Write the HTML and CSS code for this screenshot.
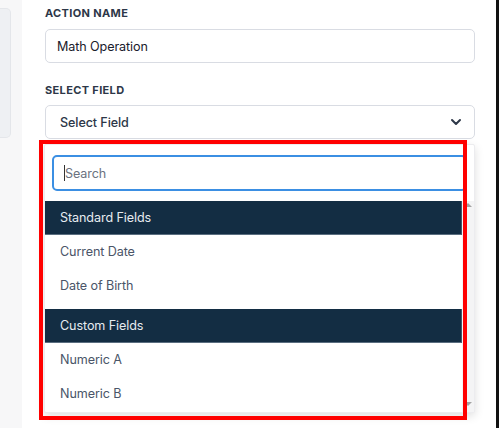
FILE: index.html
```html
<!DOCTYPE html>
<html>
<head>
<meta charset="utf-8">
<link rel="stylesheet" href="styles.css">
</head>
<body>
<div class="page">
  <aside class="side"><div class="side-box"></div></aside>
  <main class="panel">
    <div class="label">ACTION NAME</div>
    <div class="input">Math Operation</div>
    <div class="label label-2">SELECT FIELD</div>
    <div class="select">
      <span>Select Field</span>
      <svg class="chev" width="12" height="8" viewBox="0 0 12 8"><path d="M2 2l4 4 4-4" fill="none" stroke="#2d3748" stroke-width="2" stroke-linecap="round" stroke-linejoin="round"/></svg>
    </div>
    <div class="dropdown">
      <div class="search-wrap">
        <div class="search"><span class="caret"></span><span class="ph">Search</span></div>
      </div>
      <div class="list-wrap">
        <div class="list">
          <div class="group">Standard Fields</div>
          <div class="item">Current Date</div>
          <div class="item">Date of Birth</div>
          <div class="group group-2">Custom Fields</div>
          <div class="item">Numeric A</div>
          <div class="item">Numeric B</div>
        </div>
        <div class="scroll">
          <span class="arr up"></span>
          <span class="arr down"></span>
        </div>
      </div>
    </div>
    <div class="highlight"></div>
  </main>
  <div class="edge"></div>
</div>
</body>
</html>
```
FILE: styles.css
```css
* { box-sizing: border-box; }
html, body { margin: 0; padding: 0; }
body {
  width: 499px;
  height: 428px;
  overflow: hidden;
  background: #f7f7f8;
  font-family: Inter, "Noto Sans", sans-serif;
}
.page {
  display: flex;
  height: 428px;
}
.side {
  width: 22px;
  flex: none;
  padding-top: 8px;
}
.side-box {
  width: 11px;
  height: 130px;
  background: #eef0f3;
  border: 1px solid #e4e6ea;
  border-left: none;
  border-radius: 0 5px 5px 0;
}
.panel {
  position: relative;
  flex: 1;
  background: #fff;
  padding: 6px 21px 0 23px;
}
.edge {
  width: 3px;
  flex: none;
  background: #111;
}
.label {
  font-size: 11px;
  line-height: 14px;
  font-weight: 700;
  letter-spacing: 0.35px;
  color: #2d3748;
  margin-bottom: 9px;
}
.label-2 {
  margin-top: 20px;
  margin-bottom: 8px;
}
.input, .select {
  height: 34px;
  border: 1px solid #d9dce3;
  border-radius: 5px;
  display: flex;
  align-items: center;
  font-size: 12.6px;
  letter-spacing: -0.1px;
}
.input {
  padding-left: 11px;
  color: #1a202c;
}
.select {
  padding: 0 12px 0 14px;
  justify-content: space-between;
  color: #2d3748;
  font-weight: 500;
}
.dropdown {
  margin: 5px 0 0 -1px;
  background: #fff;
  border: 1px solid #ececef;
  box-shadow: 0 3px 10px rgba(0,0,0,0.13);
  border-radius: 2px;
}
.search-wrap {
  padding: 10px 7px 10px 7px;
}
.search {
  height: 36px;
  border: 2px solid #3b8fe3;
  border-radius: 5px;
  display: flex;
  align-items: center;
  padding-left: 10px;
  font-size: 12.6px;
  letter-spacing: -0.1px;
}
.caret {
  width: 1px;
  height: 16px;
  background: #333;
}
.ph { color: #6b7280; }
.list-wrap {
  display: flex;
  height: 211px;
  overflow: hidden;
}
.list {
  flex: 1;
}
.group {
  height: 34px;
  background: #132d43;
  border-bottom: 1px solid #5a6e80;
  border-right: 1px solid #40576b;
  color: #e6ebf0;
  font-size: 12.6px;
  letter-spacing: -0.1px;
  display: flex;
  align-items: center;
  padding-left: 15px;
}
.group-2 { margin-top: 7px; }
.item {
  height: 33.5px;
  display: flex;
  align-items: center;
  padding-left: 15px;
  font-size: 12.6px;
  letter-spacing: -0.1px;
  color: #4a5568;
}
.scroll {
  width: 12px;
  flex: none;
  background: #f4f4f5;
  display: flex;
  flex-direction: column;
  justify-content: space-between;
  align-items: center;
  padding: 2px 0 6px;
}
.arr {
  width: 0;
  height: 0;
  border-left: 4px solid transparent;
  border-right: 4px solid transparent;
}
.arr.up { border-bottom: 4px solid #a3a3a3; }
.arr.down { border-top: 4px solid #a3a3a3; }
.highlight {
  position: absolute;
  left: 17px;
  top: 140px;
  width: 428px;
  height: 280px;
  border: 4px solid #ff0000;
  pointer-events: none;
}
```
